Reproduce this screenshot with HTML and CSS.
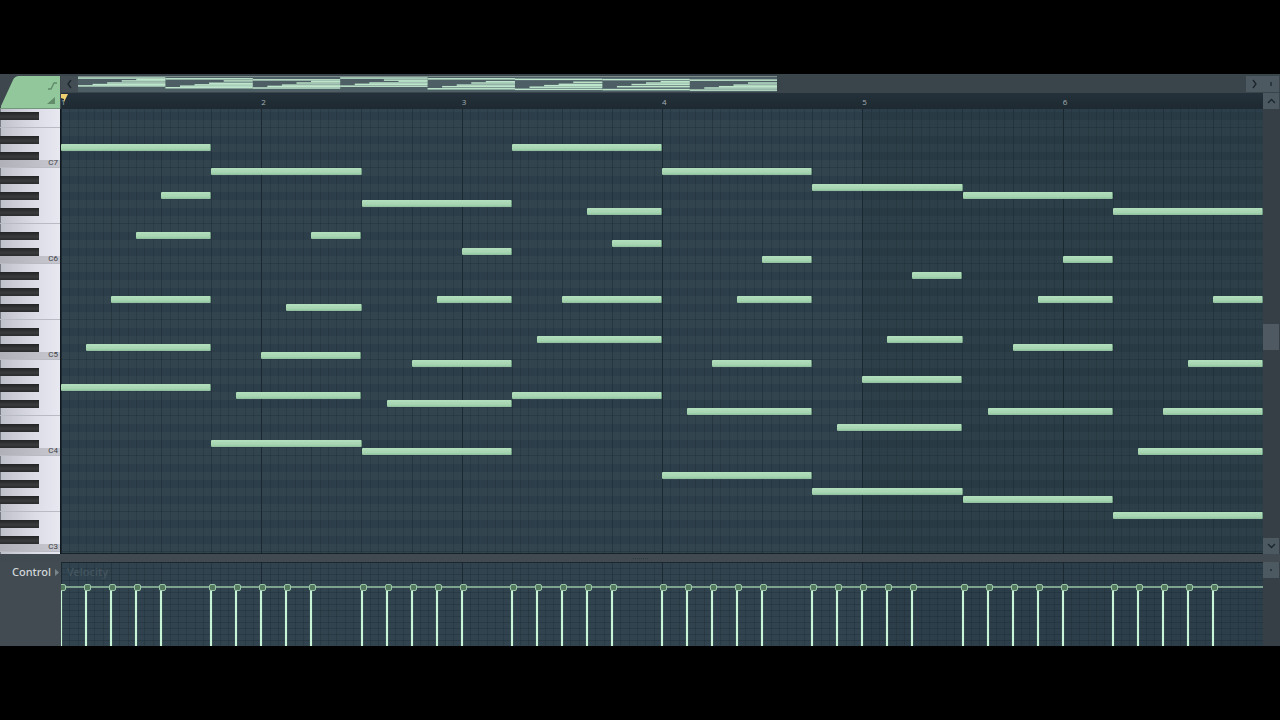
FILE: index.html
```html
<!DOCTYPE html>
<html lang="en">
<head>
<meta charset="utf-8">
<title>Piano roll</title>
<link rel="stylesheet" href="styles.css">
</head>
<body>
<main class="app">
  <div class="corner">
    <svg width="61" height="35" viewBox="0 0 61 35" aria-hidden="true">
      <path d="M1 35V32L13 6Q15 2 19 2H60V35Z" fill="#92c79b"/>
      <path d="M0 35H60" stroke="#73977b" stroke-width="2"/>
      <path d="M48 15H51L54 9H57" fill="none" stroke="#5f8a68" stroke-width="1.3"/>
      <path d="M47 30L55 23V30Z" fill="#618b69"/>
    </svg>
  </div>
  <header class="top">
    <div class="overview">
      <button class="btn prev" type="button" aria-label="Scroll left"><svg width="7" height="10" viewBox="0 0 7 10"><path d="M5 1L2 5L5 9"/></svg></button>
      <div class="track"><svg class="mini" id="mini" viewBox="0 0 48 16" preserveAspectRatio="none" aria-hidden="true"></svg></div>
    </div>
    <div class="ruler" id="ruler"></div>
  </header>
  <div class="topright">
    <div class="pair">
      <button class="btn" type="button" aria-label="Scroll right"><svg width="7" height="10" viewBox="0 0 7 10"><path d="M2 1L5 5L2 9"/></svg></button>
      <button class="btn" type="button" aria-label="Zoom"><svg width="4" height="4" viewBox="0 0 4 4"><path d="M2 0V4"/></svg></button>
    </div>
    <button class="btn up" type="button" aria-label="Scroll up"><svg width="9" height="6" viewBox="0 0 9 6"><path d="M1 5L4.500 1.500L8 5"/></svg></button>
  </div>
  <div class="keys" id="keys"></div>
  <section class="roll" id="roll" aria-label="Notes"></section>
  <div class="scroll">
    <div class="thumb"></div>
    <button class="btn down" type="button" aria-label="Scroll down"><svg width="9" height="6" viewBox="0 0 9 6"><path d="M1 1L4.500 4.500L8 1"/></svg></button>
  </div>
  <div class="splitter"><span class="grip"></span></div>
  <div class="control">
    <button class="control-btn" type="button">Control <svg width="4" height="7" viewBox="0 0 4 7"><path d="M0 0L4 3.500L0 7Z" fill="#78858b"/></svg></button>
  </div>
  <section class="velocity" id="velocity" aria-label="Velocity"><span class="velocity-name">Velocity</span><div class="level"></div></section>
  <div class="side"><button class="btn dot" type="button" aria-label="Resize"><svg width="2" height="2" viewBox="0 0 2 2"><path d="M1 0V2"/></svg></button></div>
</main>
<script src="script.js"></script>
</body>
</html>
```

FILE: styles.css
```css
* { box-sizing: border-box; }

body {
  margin: 0;
  min-height: 100vh;
  display: flex;
  align-items: center;
  background: #000;
  font-family: "Noto Sans", "Open Sans", sans-serif;
}

.app {
  flex: 1;
  display: grid;
  grid-template-columns: 61px 1fr 17px;
  grid-template-rows: 35px auto 8px 84px;
  background: #3d474d;
  overflow: hidden;
}

button { padding: 0; border: 0; font: inherit; }
svg { display: block; }

.btn {
  display: flex;
  align-items: center;
  justify-content: center;
  height: 16px;
  width: 16px;
  background: #4d5960;
}
.btn path { fill: none; stroke: #19242b; stroke-width: 1.3; }

.top { display: flex; flex-direction: column; min-width: 0; }
.overview {
  display: flex;
  height: 19px;
  padding: 2px 0 1px;
  background: #3a454b;
}
.prev { width: 17px; background: #424d54; }
.track { flex: 1; }
.mini { width: 59%; height: 16px; background: #4e5e65; border-top: 1px solid #7c8c8c; }
.mini rect { fill: #bde5cb; }

.ruler {
  flex: 1;
  display: grid;
  grid-template-columns: repeat(6, 1fr);
  background: linear-gradient(#25313a, #1d2830);
  border-bottom: 1px solid #31414b;
  font: 8px/18px "Open Sans", sans-serif;
  color: #a5afb4;
  position: relative;
}
.marker { position: absolute; left: 0; top: 1px; }

.topright { display: flex; flex-direction: column; align-items: flex-end; padding-top: 2px; gap: 1px; padding-right: 1px; background: #3a454b; }
.pair { display: flex; position: relative; z-index: 1; }
.pair .btn:first-child { width: 17px; }

.keys {
  display: flex;
  flex-direction: column;
  height: 445px;
  padding-top: 3px;
  overflow: hidden;
  border-right: 1px solid #10181e;
  background: linear-gradient(90deg, #bfc1ca, #dddde8 60%, #e7e8f0);
  box-shadow: inset 1px 0 #777c84;
}
.key { flex: none; height: 8px; display: flex; justify-content: space-between; }
.key.edge { border-bottom: 1px solid #b9bbc4; }
.key.black::before {
  content: "";
  width: 39px;
  background: linear-gradient(#222324, #3a3b3c 60%, #292a2b);
}
.key.c {
  justify-content: flex-end;
  background: linear-gradient(90deg, #b0b1b8, #c8c8d1);
}
.octave { padding-right: 2px; font: 8px/5px "Roboto", sans-serif; color: #3d3f44; }

.roll {
  position: relative;
  height: 445px;
  padding-top: 3px;
  overflow: hidden;
  background: #30434e;
  border-bottom: 1px solid #172128;
}
.row { height: 8px; background: #32454f; }
.row.black { background: #2c3e49; }
.row.edge { border-bottom: 1px solid #293b46; }

.lines {
  position: absolute;
  inset: 0;
  background:
    repeating-linear-gradient(90deg, #1b2831 0 1px, transparent 1px calc(100% / 6)),
    repeating-linear-gradient(90deg, rgba(20, 32, 40, .2) 0 1px, transparent 1px calc(100% / 24)),
    repeating-linear-gradient(90deg, rgba(20, 32, 40, .22) 0 1px, transparent 1px calc(100% / 144));
}
.shade {
  position: absolute;
  inset: 0 0 0 66.667%;
  background: rgba(18, 34, 44, .14);
}
.note {
  position: absolute;
  height: 7px;
  border-radius: 1px;
  border-right: 1px solid #6f9c80;
  background: linear-gradient(#b3e0bd, #a4d3af 70%, #8fbd9c);
}

.scroll { display: flex; flex-direction: column; justify-content: space-between; background: #373f46; }
.thumb { height: 26px; width: 16px; margin-top: 215px; background: #4f5961; }

.splitter {
  grid-column: 1 / -1;
  display: flex;
  align-items: center;
  justify-content: center;
  background: #414a50;
}
.grip { width: 15px; border-top: 1px dotted #303a41; }

.control { padding: 1px 0 0 12px; background: #424b51; }
.control-btn {
  display: flex;
  align-items: center;
  gap: 4px;
  background: none;
  color: #d1d7da;
  font-size: 11px;
  font-weight: 500;
  line-height: 18px;
}

.velocity {
  position: relative;
  overflow: hidden;
  border-top: 1px solid #1b262d;
  background:
    repeating-linear-gradient(transparent 0 5px, rgba(20, 32, 40, .25) 5px 6px),
    #30434e;
}
.velocity-name {
  display: block;
  padding-left: 6px;
  font-size: 11px;
  font-weight: 500;
  line-height: 18px;
  color: #455660;
}
.level { position: absolute; inset: 23px 0 auto; height: 2px; background: #7da38e; }
.stem {
  position: absolute;
  top: 25px;
  bottom: 0;
  width: 2px;
  margin-left: -1px;
  background: #c8f5d8;
  box-shadow: 0 0 1px #80b08f;
}
.stem::before {
  content: "";
  position: absolute;
  left: -1px;
  top: -4px;
  width: 5px;
  height: 5px;
  border: 1px solid #9bc9a9;
  border-radius: 2px;
  background: #55795f;
}
.side { background: #373f46; }
```

FILE: script.js
```js
const STEPS = 48;
const ROW = 8;

// [row, start step] per chord; every note lasts until its chord ends.
const CHORDS = [
  [[5, 0], [11, 4], [16, 3], [24, 2], [30, 1], [35, 0]],
  [[8, 6], [16, 10], [25, 9], [31, 8], [36, 7], [42, 6]],
  [[12, 12], [18, 16], [24, 15], [32, 14], [37, 13], [43, 12]],
  [[5, 18], [13, 21], [17, 22], [24, 20], [29, 19], [36, 18]],
  [[8, 24], [19, 28], [24, 27], [32, 26], [38, 25], [46, 24]],
  [[10, 30], [21, 34], [29, 33], [34, 32], [40, 31], [48, 30]],
  [[11, 36], [19, 40], [24, 39], [30, 38], [38, 37], [49, 36]],
  [[13, 42], [24, 46], [32, 45], [38, 44], [43, 43], [51, 42]]
];

const pct = (n) => (n / STEPS * 100) + '%';

function add(parent, cls, text) {
  const el = document.createElement('div');
  el.className = cls;
  if (text) el.textContent = text;
  parent.append(el);
  return el;
}

const keys = document.getElementById('keys');
const roll = document.getElementById('roll');
const velocity = document.getElementById('velocity');
const mini = document.getElementById('mini');
const ruler = document.getElementById('ruler');

// Rows run down from F#7 to B2.
for (let i = 1; i <= 56; i++) {
  const pitch = (6 - i + 1 + 120) % 12;
  const kind = [1, 3, 6, 8, 10].includes(pitch) ? ' black' : '';
  const edge = pitch === 0 || pitch === 5 ? ' edge' : '';
  const key = add(keys, 'key' + kind + edge + (pitch === 0 ? ' c' : ''));
  if (pitch === 0) {
    const label = document.createElement('span');
    label.className = 'octave';
    label.textContent = 'C' + (7 - (i - 7) / 12);
    key.append(label);
  }
  add(roll, 'row' + kind + edge);
}
add(roll, 'shade');
add(roll, 'lines');
velocity.prepend(add(velocity, 'lines'));
velocity.prepend(add(velocity, 'shade'));

CHORDS.forEach((chord, c) => {
  const end = (c + 1) * 6;
  chord.forEach(([row, start]) => {
    const note = add(roll, 'note');
    note.style.left = pct(start);
    note.style.width = pct(end - start);
    note.style.top = (row - 1) * ROW + 3 + 'px';

    const r = document.createElementNS('http://www.w3.org/2000/svg', 'rect');
    r.setAttribute('x', start);
    r.setAttribute('width', end - start);
    r.setAttribute('y', (row - 5) * 0.28 + 0.3);
    r.setAttribute('height', 1.6);
    mini.append(r);
  });
  for (let s = c * 6; s < c * 6 + 5; s++) add(velocity, 'stem').style.left = pct(s);
});

for (let b = 1; b <= 6; b++) add(ruler, 'bar-number', String(b));
ruler.insertAdjacentHTML('beforeend',
  '<svg class="marker" width="7" height="8" viewBox="0 0 7 8"><path d="M0 0H7L3 8V5L0 4Z" fill="#edcf70"/></svg>');
```
